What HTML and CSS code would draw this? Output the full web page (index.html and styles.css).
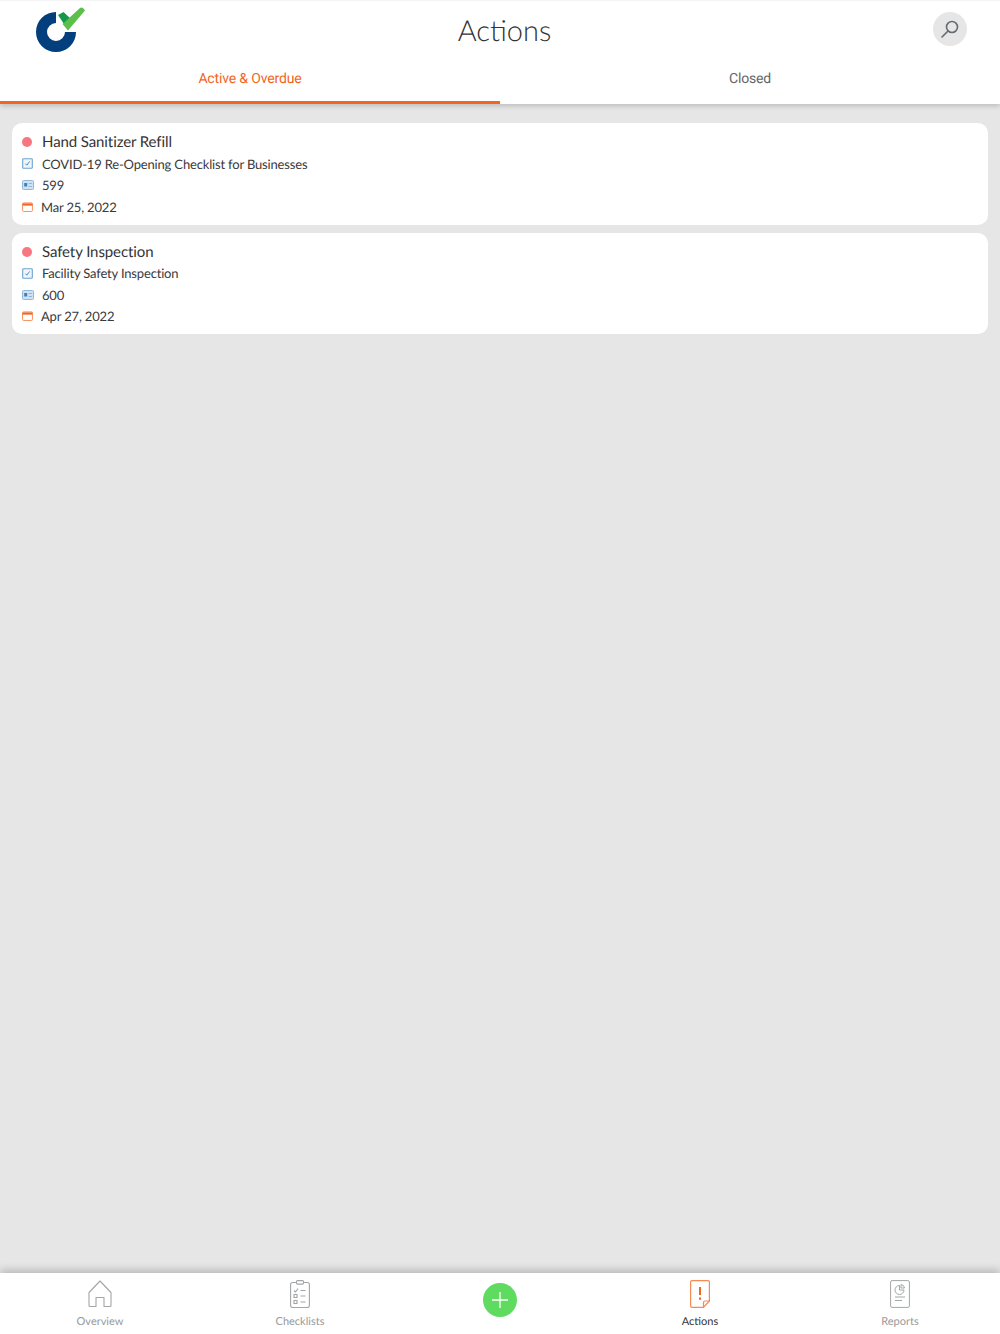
FILE: index.html
```html
<!DOCTYPE html>
<html lang="en">
<head>
    <meta charset="UTF-8">
    <meta name="viewport" content="width=device-width, initial-scale=1.0">
    <title>Actions</title>
    <link rel="stylesheet" href="styles.css">
</head>
<body>
    <div class="app">
        <header class="topbar">
            <div class="title-row">
                <svg class="logo" viewBox="0 0 50 46" width="50" height="46">
                    <path d="M21 5A20 20 0 1 0 41 25H30A9 9 0 1 1 21 16Z" fill="#023f7c"/>
                    <path d="M23 8L28.500 5L37 13L33 23Z" fill="#12994b"/>
                    <path d="M33 23.500L27.500 17L45 1Q46.500 0 48 1L50 3.500Z" fill="#5cbe4b"/>
                </svg>
                <h1 class="page-title">Actions</h1>
                <button class="search-btn">
                    <svg viewBox="0 0 20 20" width="20" height="20" fill="none" stroke="#666b70" stroke-width="1.600">
                        <circle cx="12" cy="8" r="5.500"/>
                        <path d="M8 12L2 18" stroke-linecap="round"/>
                    </svg>
                </button>
            </div>
            <nav class="tabs">
                <div class="tab tab-active">Active &amp; Overdue</div>
                <div class="tab">Closed</div>
            </nav>
        </header>

        <main class="list">
            <div class="card">
                <div class="card-title"><span class="dot"></span>Hand Sanitizer Refill</div>
                <div class="card-row">
                    <svg class="row-icon icon-check" viewBox="0 0 12 12" width="11" height="11" fill="none"><rect x=".75" y=".75" width="10.500" height="10.500" rx="1" fill="#eef5fb" stroke="#6fa3cf" stroke-width="1.200"/><path d="M3.700 6.200L5.300 7.800L8.300 3.800" stroke="#3f7fb5"/></svg>
                    COVID-19 Re-Opening Checklist for Businesses
                </div>
                <div class="card-row">
                    <svg class="row-icon" viewBox="0 0 12 10" width="12" height="10"><rect x=".5" y=".5" width="11" height="9" rx="1" fill="#cfe2f3" stroke="#8fb8da"/><rect x="2.200" y="3" width="3" height="3.500" fill="#3f7fb5"/><path d="M6.700 3.500H10M6.700 6.500H10" stroke="#8fb8da"/></svg>
                    599
                </div>
                <div class="card-row">
                    <svg class="row-icon icon-date" viewBox="0 0 12 11" width="11" height="10" fill="none"><rect x=".6" y="1" width="10.800" height="9.400" rx="1" stroke="#f5925f" stroke-width="1.100"/><path d="M.6 1.600H11.400V4H.6Z" fill="#f26522"/></svg>
                    Mar 25, 2022
                </div>
            </div>

            <div class="card">
                <div class="card-title"><span class="dot"></span>Safety Inspection</div>
                <div class="card-row">
                    <svg class="row-icon icon-check" viewBox="0 0 12 12" width="11" height="11" fill="none"><rect x=".75" y=".75" width="10.500" height="10.500" rx="1" fill="#eef5fb" stroke="#6fa3cf" stroke-width="1.200"/><path d="M3.700 6.200L5.300 7.800L8.300 3.800" stroke="#3f7fb5"/></svg>
                    Facility Safety Inspection
                </div>
                <div class="card-row">
                    <svg class="row-icon" viewBox="0 0 12 10" width="12" height="10"><rect x=".5" y=".5" width="11" height="9" rx="1" fill="#cfe2f3" stroke="#8fb8da"/><rect x="2.200" y="3" width="3" height="3.500" fill="#3f7fb5"/><path d="M6.700 3.500H10M6.700 6.500H10" stroke="#8fb8da"/></svg>
                    600
                </div>
                <div class="card-row">
                    <svg class="row-icon icon-date" viewBox="0 0 12 11" width="11" height="10" fill="none"><rect x=".6" y="1" width="10.800" height="9.400" rx="1" stroke="#f5925f" stroke-width="1.100"/><path d="M.6 1.600H11.400V4H.6Z" fill="#f26522"/></svg>
                    Apr 27, 2022
                </div>
            </div>
        </main>

        <footer class="bottom-nav">
            <div class="nav-item">
                <svg viewBox="0 0 24 28" width="24" height="28" fill="none" stroke="#a3a5a7" stroke-width="1.100">
                    <path d="M1 12.500L12 1L23 12.500V25.500Q23 26.500 22 26.500H16V17.500H8V26.500H2Q1 26.500 1 25.500Z" stroke-linejoin="round"/>
                </svg>
                <span>Overview</span>
            </div>
            <div class="nav-item">
                <svg viewBox="0 0 20 28" width="20" height="28" fill="none" stroke="#a3a5a7" stroke-width="1.100">
                    <rect x=".6" y="2.500" width="18.800" height="25" rx="2"/>
                    <rect x="6.500" y=".6" width="7" height="3.500" rx="1" fill="#fff"/>
                    <path d="M4 10.500L5.500 12L8 8.500M10.500 10.500H15.500M10.500 16H15.500M10.500 22H15.500"/>
                    <rect x="4" y="14.500" width="3" height="3"/>
                    <rect x="4" y="20.500" width="3" height="3"/>
                </svg>
                <span>Checklists</span>
            </div>
            <div class="nav-item">
                <button class="add-btn">
                    <svg viewBox="0 0 16 16" width="16" height="16" stroke="#fff" stroke-width="1.300"><path d="M8 0V16M0 8H16"/></svg>
                </button>
            </div>
            <div class="nav-item nav-active">
                <svg viewBox="0 0 20 28" width="20" height="28" fill="none" stroke="#f58a55" stroke-width="1.200">
                    <path d="M2 .6H18Q19.400 .6 19.400 2V21L13.500 27.400H2Q.6 27.400 .6 26V2Q.6 .6 2 .6Z" stroke-linejoin="round"/>
                    <path d="M19.400 21H15Q13.500 21 13.500 22.500V27.400"/>
                    <path d="M10 7V15" stroke="#f26522" stroke-width="2"/>
                    <path d="M10 17.500V19.800" stroke="#f26522" stroke-width="2"/>
                </svg>
                <span>Actions</span>
            </div>
            <div class="nav-item">
                <svg viewBox="0 0 20 28" width="20" height="28" fill="none" stroke="#a3a5a7" stroke-width="1">
                    <rect x=".6" y=".6" width="18.800" height="26.800" rx="1.500"/>
                    <path d="M9.500 5.500A4.500 4.500 0 1 0 14 10H9.500Z"/>
                    <path d="M11 4.500A4 4 0 0 1 14.500 8H11Z"/>
                    <path d="M5 17H15M5 20.500H12"/>
                </svg>
                <span>Reports</span>
            </div>
        </footer>
    </div>
</body>
</html>
```

FILE: styles.css
```css
* {
    box-sizing: border-box;
}
html, body {
    margin: 0;
    height: 100%;
}
body {
    font-family: "Lato", sans-serif;
    background: #e6e6e6;
    color: #3a3a3a;
    text-rendering: geometricPrecision;
}
.app {
    height: 1334px;
    display: flex;
    flex-direction: column;
}
.topbar {
    background: #fff;
    box-shadow: 0 2px 5px rgba(0,0,0,0.18);
    border-top: 1px solid #f4f4f4;
    height: 104px;
}
.title-row {
    height: 58px;
    display: flex;
    align-items: center;
    justify-content: space-between;
    padding: 0 33px 0 35px;
}
.page-title {
    flex: 1;
    margin: 0 9px 0 0;
    text-align: center;
    font-size: 29px;
    font-weight: 300;
    color: #333;
}
.search-btn {
    width: 34px;
    height: 34px;
    padding: 0;
    border: 0;
    border-radius: 50%;
    background: #e6e6e6;
    display: flex;
    align-items: center;
    justify-content: center;
    margin-top: -2px;
}
.tabs {
    display: flex;
    height: 45px;
}
.tab {
    flex: 1;
    font-family: "Roboto", sans-serif;
    font-size: 14px;
    letter-spacing: -0.15px;
    color: #666;
    text-align: center;
    padding-top: 12px;
}
.tab-active {
    color: #f26522;
    border-bottom: 3px solid #f26522;
}
.list {
    flex: 1;
    padding: 19px 12px 0;
    display: flex;
    flex-direction: column;
    gap: 8px;
}
.card {
    background: #fff;
    border-radius: 10px;
    height: 101.500px;
    padding: 8px 10px 0;
}
.card-title {
    display: flex;
    align-items: center;
    font-size: 15px;
    letter-spacing: -0.1px;
    height: 22px;
    color: #333;
}
.dot {
    width: 10px;
    height: 10px;
    border-radius: 50%;
    background: #f87680;
    margin-right: 10px;
}
.card-row {
    display: flex;
    align-items: center;
    font-size: 13px;
    letter-spacing: -0.17px;
    height: 21.500px;
    color: #3a3a3a;
}
.row-icon {
    margin: 0 8px 0 0;
}
.icon-check {
    margin-right: 9px;
}
.icon-date {
    margin-right: 8px;
}
.bottom-nav {
    height: 61px;
    background: #fff;
    display: flex;
    box-shadow: 0 -3px 8px rgba(0,0,0,0.2);
}
.nav-item {
    flex: 1;
    display: flex;
    flex-direction: column;
    align-items: center;
    padding-top: 7px;
    gap: 7px;
    font-size: 11px;
    color: #97999b;
}
.nav-active {
    color: #333;
}
.add-btn {
    width: 34px;
    height: 34px;
    margin-top: 3px;
    padding: 0;
    border: 0;
    border-radius: 50%;
    background: #5fdc60;
    display: flex;
    align-items: center;
    justify-content: center;
}
```
